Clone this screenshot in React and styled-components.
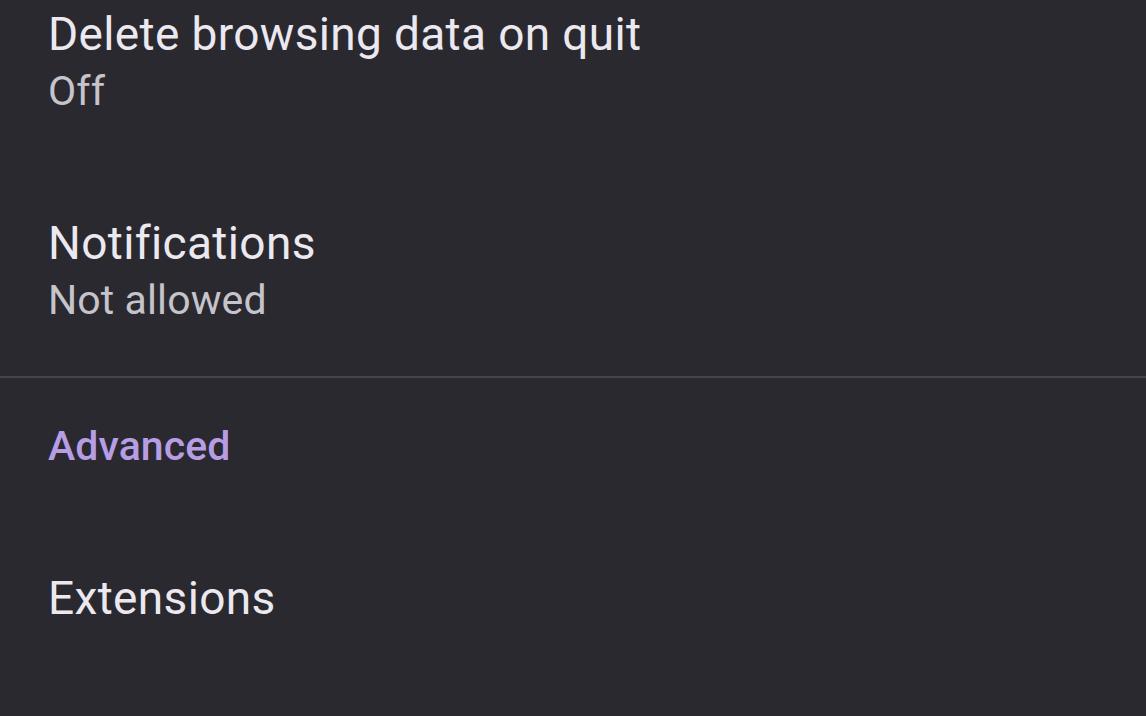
import * as React from "react";
import styled, { createGlobalStyle } from "styled-components";

const GlobalStyle = createGlobalStyle`
  html, body {
    margin: 0;
    padding: 0;
    background: #2a292f;
  }
  body {
    font-family: Roboto, "Noto Sans", "Liberation Sans", sans-serif;
    -webkit-font-smoothing: antialiased;
  }
`;

const Screen = styled.div`
  width: 1146px;
  height: 716px;
  overflow: hidden;
  background: #2a292f;
`;

// the list is scrolled a little, so the first row's top padding is out of view
const List = styled.div`
  display: flex;
  flex-direction: column;
  margin-top: -42px;
`;

const Item = styled.div`
  display: flex;
  flex-direction: column;
  padding: 48px 48px;
  border-bottom: ${(p) => (p.$divider ? "2px solid #45444b" : "none")};
`;

const Title = styled.div`
  font-size: 46px;
  line-height: 56px;
  font-weight: 400;
  color: #ebe9ef;
  letter-spacing: 0.35px;
`;

const Summary = styled.div`
  font-size: 41px;
  line-height: 56px;
  margin-top: 1px;
  font-weight: 400;
  color: #c6c4cb;
  letter-spacing: 0.1px;
`;

const Header = styled.div`
  padding: 40px 48px 48px;
  font-size: 41px;
  line-height: 56px;
  font-weight: 500;
  color: #b69de4;
  letter-spacing: 0.1px;
`;

const rows = [
  { title: "Delete browsing data on quit", summary: "Off" },
  { title: "Notifications", summary: "Not allowed", divider: true },
];

export default function App() {
  return (
    <>
      <GlobalStyle />
      <Screen>
        <List>
          {rows.map((r) => (
            <Item key={r.title} $divider={r.divider}>
              <Title>{r.title}</Title>
              {r.summary && <Summary>{r.summary}</Summary>}
            </Item>
          ))}
          <Header>Advanced</Header>
          <Item>
            <Title>Extensions</Title>
          </Item>
        </List>
      </Screen>
    </>
  );
}
